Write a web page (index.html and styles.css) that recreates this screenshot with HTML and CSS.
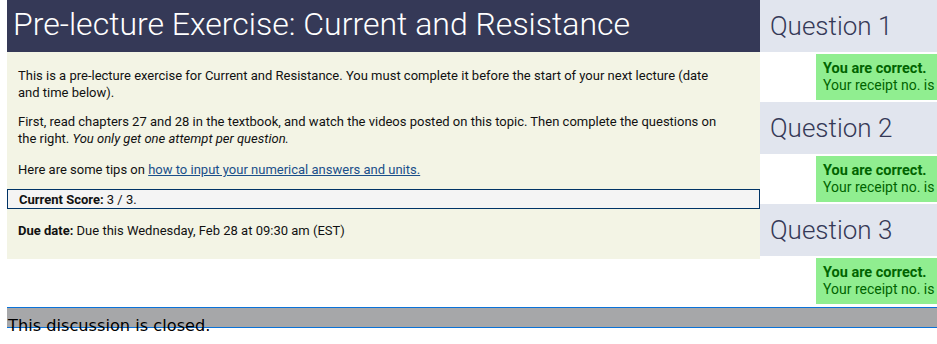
FILE: index.html
```html
<!DOCTYPE html>
<html>
<head>
<meta charset="utf-8">
<link rel="stylesheet" href="styles.css">
</head>
<body>
<div class="page">
  <div class="main">
    <div class="lecture">
      <h1 class="title">Pre-lecture Exercise: Current and Resistance</h1>
      <div class="intro">
        <p>This is a pre-lecture exercise for Current and Resistance. You must complete it before the start of your next lecture (date and time below).</p>
        <p class="p2">First, read chapters 27 and 28 in the textbook, and watch the videos posted on this topic. Then complete the questions on the right. <em>You only get one attempt per question.</em></p>
        <p class="p3">Here are some tips on <a href="#">how to input your numerical answers and units.</a></p>
      </div>
      <div class="score"><b>Current Score:</b> 3 / 3.</div>
      <div class="due"><b>Due date:</b> Due this Wednesday, Feb 28 at 09:30 am (EST)</div>
    </div>
    <div class="questions">
      <div class="q-head">Question 1</div>
      <div class="q-result"><b>You are correct.</b><br>Your receipt no. is</div>
      <div class="q-head">Question 2</div>
      <div class="q-result"><b>You are correct.</b><br>Your receipt no. is</div>
      <div class="q-head">Question 3</div>
      <div class="q-result"><b>You are correct.</b><br>Your receipt no. is</div>
    </div>
  </div>
  <div class="closed"><span>This discussion is closed.</span></div>
</div>
</body>
</html>
```

FILE: styles.css
```css
html {
  overflow: hidden;
}
body {
  margin: 0;
  padding: 0 0 20px 0;
  min-height: 344px;
  box-sizing: border-box;
  background: #ffffff;
}
.page {
  padding-left: 7px;
  width: 1100px;
}
.main {
  display: flex;
  align-items: flex-start;
}
.lecture {
  width: 753px;
  flex: none;
  background: #f3f4e5;
  font-family: Roboto, "Liberation Sans", sans-serif;
  font-size: 13px;
  line-height: 17px;
  color: #111111;
  padding-bottom: 20px;
}
.title {
  margin: 0;
  height: 52px;
  background: #353957;
  color: #ffffff;
  font-weight: 300;
  font-size: 32px;
  line-height: 48px;
  padding-left: 6px;
  white-space: nowrap;
}
.intro {
  padding: 15px 32px 0 11px;
}
.intro p {
  margin: 0 0 12px 0;
}
.intro .p2 {
  margin-bottom: 14px;
}
.intro .p3 {
  margin-bottom: 11px;
}
.intro a {
  color: #1a4f8a;
  text-decoration: underline;
}
.score {
  border: 1px solid #003366;
  background: #f4f4f4;
  padding: 1px 11px 0 11px;
  height: 17px;
}
.due {
  padding: 13px 11px 0 11px;
}
.questions {
  width: 340px;
  flex: none;
}
.q-head {
  height: 52px;
  background: #e1e5ee;
  color: #353957;
  font-family: Roboto, "Liberation Sans", sans-serif;
  font-weight: 300;
  font-size: 26px;
  line-height: 52px;
  padding-left: 10px;
}
.q-result {
  margin: 2px 0 2px 56px;
  height: 46px;
  box-sizing: border-box;
  padding: 6px 7px;
  background: #90ee90;
  color: #006400;
  font-family: Roboto, "Liberation Sans", sans-serif;
  font-size: 14px;
  line-height: 17px;
  white-space: nowrap;
}
.q-result b {
  font-size: 14.5px;
}
.closed {
  margin-top: 1px;
  height: 19px;
  background: #a6a7a9;
  border-top: 1px solid #0a72d8;
  border-bottom: 1px solid #0a72d8;
  font-family: "DejaVu Sans", Verdana, sans-serif;
  font-size: 16.2px;
  color: #000000;
}
.closed span {
  display: block;
  padding-top: 8px;
  padding-left: 1px;
  line-height: 20px;
}
```
